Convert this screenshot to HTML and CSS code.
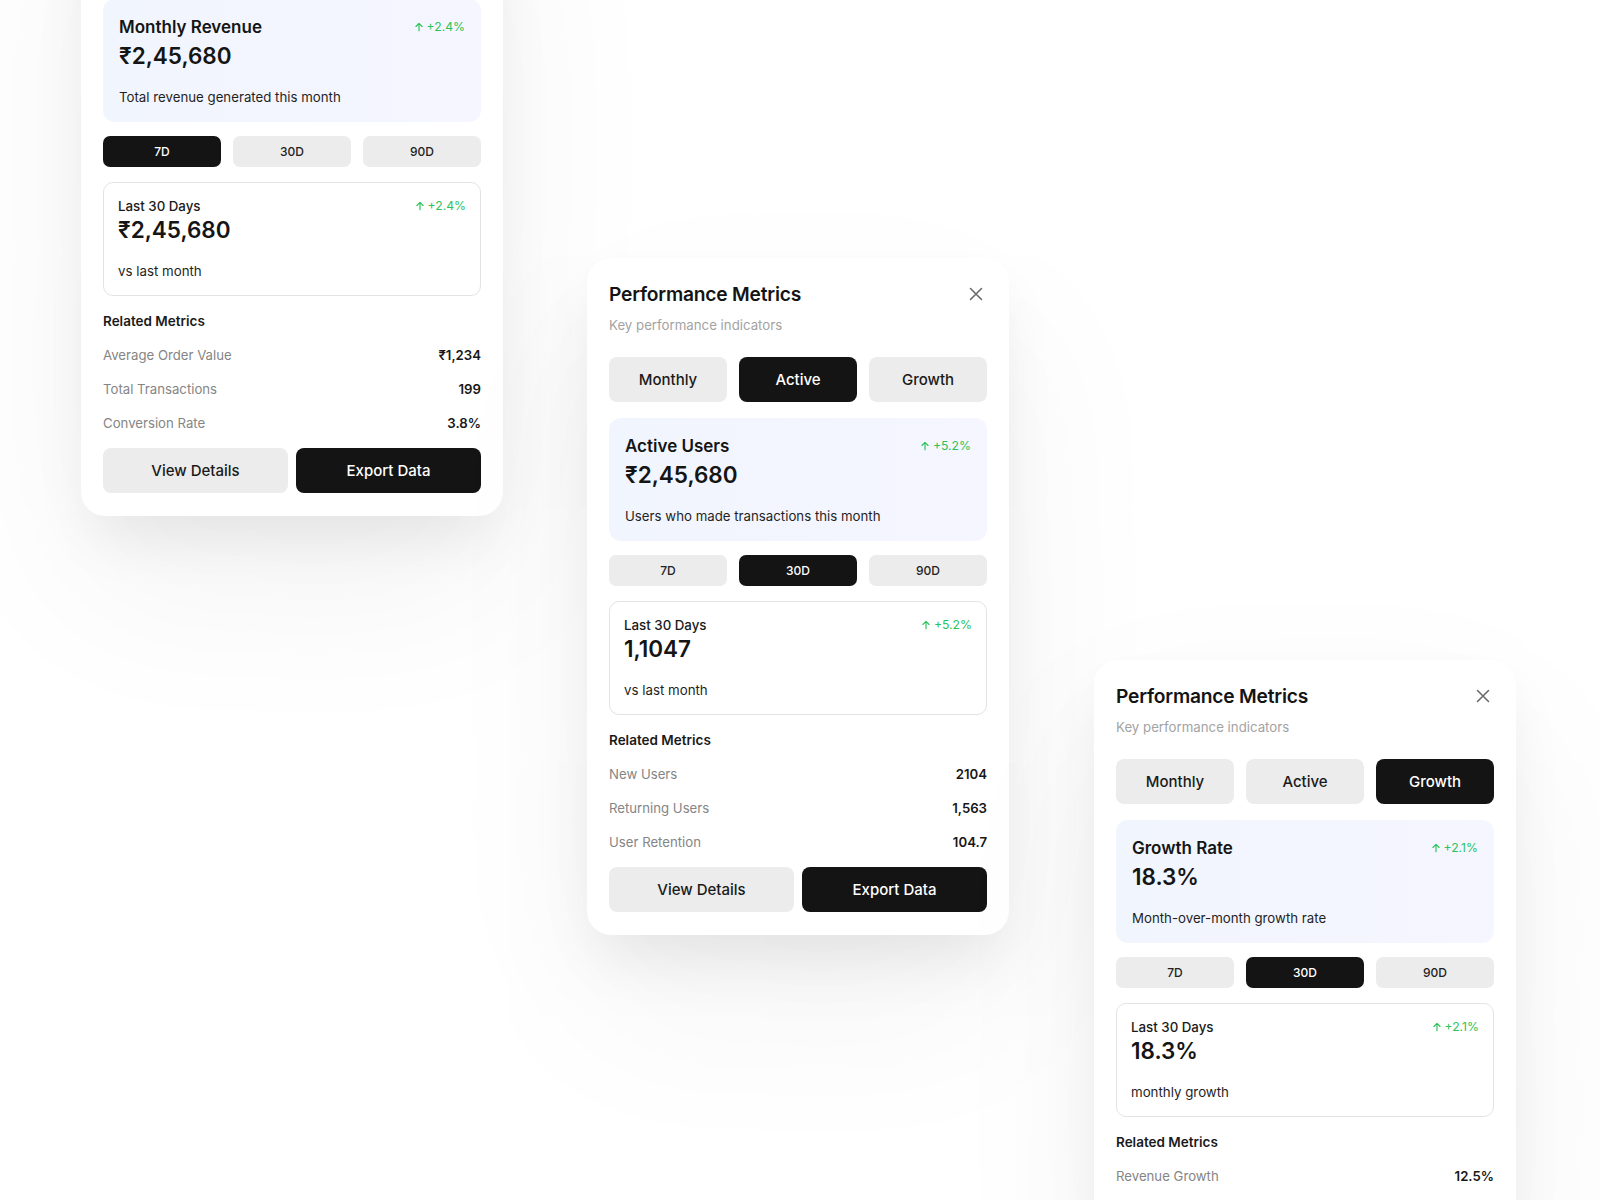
FILE: index.html
```html
<!DOCTYPE html>
<html lang="en">
<head>
<meta charset="utf-8">
<title>Performance Metrics</title>
<link rel="stylesheet" href="styles.css">
</head>
<body>
<div class="stage">

  <!-- Card 1 -->
  <section class="card card-a">
    <header class="card-head">
      <div>
        <h2 class="title">Performance Metrics</h2>
        <p class="subtitle">Key performance indicators</p>
      </div>
      <button class="close" aria-label="Close"><svg viewBox="0 0 14 14" width="14" height="14"><path d="M1.5 1.5l11 11M12.5 1.5l-11 11" fill="none" stroke="#6b6b6b" stroke-width="1.6" stroke-linecap="round"/></svg></button>
    </header>
    <div class="tabs">
      <button class="tab active">Monthly</button>
      <button class="tab">Active</button>
      <button class="tab">Growth</button>
    </div>
    <div class="hero">
      <div class="row-top">
        <h3 class="hero-title">Monthly Revenue</h3>
        <span class="delta"><svg viewBox="0 0 12 12" width="10" height="10"><path d="M6 10.5V1.8M2.3 5.4 6 1.7l3.7 3.7" fill="none" stroke="currentColor" stroke-width="1.4" stroke-linecap="round" stroke-linejoin="round"/></svg>+2.4%</span>
      </div>
      <div class="value">₹2,45,680</div>
      <p class="hero-desc">Total revenue generated this month</p>
    </div>
    <div class="periods">
      <button class="period active">7D</button>
      <button class="period">30D</button>
      <button class="period">90D</button>
    </div>
    <div class="summary">
      <div class="row-top">
        <span class="sum-label">Last 30 Days</span>
        <span class="delta"><svg viewBox="0 0 12 12" width="10" height="10"><path d="M6 10.5V1.8M2.3 5.4 6 1.7l3.7 3.7" fill="none" stroke="currentColor" stroke-width="1.4" stroke-linecap="round" stroke-linejoin="round"/></svg>+2.4%</span>
      </div>
      <div class="value">₹2,45,680</div>
      <p class="sum-desc">vs last month</p>
    </div>
    <h4 class="related-title">Related Metrics</h4>
    <ul class="metrics">
      <li><span>Average Order Value</span><b>₹1,234</b></li>
      <li><span>Total Transactions</span><b>199</b></li>
      <li><span>Conversion Rate</span><b>3.8%</b></li>
    </ul>
    <div class="actions">
      <button class="btn btn-light">View Details</button>
      <button class="btn btn-dark">Export Data</button>
    </div>
  </section>

  <!-- Card 2 -->
  <section class="card card-b">
    <header class="card-head">
      <div>
        <h2 class="title">Performance Metrics</h2>
        <p class="subtitle">Key performance indicators</p>
      </div>
      <button class="close" aria-label="Close"><svg viewBox="0 0 14 14" width="14" height="14"><path d="M1.5 1.5l11 11M12.5 1.5l-11 11" fill="none" stroke="#6b6b6b" stroke-width="1.6" stroke-linecap="round"/></svg></button>
    </header>
    <div class="tabs">
      <button class="tab">Monthly</button>
      <button class="tab active">Active</button>
      <button class="tab">Growth</button>
    </div>
    <div class="hero">
      <div class="row-top">
        <h3 class="hero-title">Active Users</h3>
        <span class="delta"><svg viewBox="0 0 12 12" width="10" height="10"><path d="M6 10.5V1.8M2.3 5.4 6 1.7l3.7 3.7" fill="none" stroke="currentColor" stroke-width="1.4" stroke-linecap="round" stroke-linejoin="round"/></svg>+5.2%</span>
      </div>
      <div class="value">₹2,45,680</div>
      <p class="hero-desc">Users who made transactions this month</p>
    </div>
    <div class="periods">
      <button class="period">7D</button>
      <button class="period active">30D</button>
      <button class="period">90D</button>
    </div>
    <div class="summary">
      <div class="row-top">
        <span class="sum-label">Last 30 Days</span>
        <span class="delta"><svg viewBox="0 0 12 12" width="10" height="10"><path d="M6 10.5V1.8M2.3 5.4 6 1.7l3.7 3.7" fill="none" stroke="currentColor" stroke-width="1.4" stroke-linecap="round" stroke-linejoin="round"/></svg>+5.2%</span>
      </div>
      <div class="value">1,1047</div>
      <p class="sum-desc">vs last month</p>
    </div>
    <h4 class="related-title">Related Metrics</h4>
    <ul class="metrics">
      <li><span>New Users</span><b>2104</b></li>
      <li><span>Returning Users</span><b>1,563</b></li>
      <li><span>User Retention</span><b>104.7</b></li>
    </ul>
    <div class="actions">
      <button class="btn btn-light">View Details</button>
      <button class="btn btn-dark">Export Data</button>
    </div>
  </section>

  <!-- Card 3 -->
  <section class="card card-c">
    <header class="card-head">
      <div>
        <h2 class="title">Performance Metrics</h2>
        <p class="subtitle">Key performance indicators</p>
      </div>
      <button class="close" aria-label="Close"><svg viewBox="0 0 14 14" width="14" height="14"><path d="M1.5 1.5l11 11M12.5 1.5l-11 11" fill="none" stroke="#6b6b6b" stroke-width="1.6" stroke-linecap="round"/></svg></button>
    </header>
    <div class="tabs">
      <button class="tab">Monthly</button>
      <button class="tab">Active</button>
      <button class="tab active">Growth</button>
    </div>
    <div class="hero">
      <div class="row-top">
        <h3 class="hero-title">Growth Rate</h3>
        <span class="delta"><svg viewBox="0 0 12 12" width="10" height="10"><path d="M6 10.5V1.8M2.3 5.4 6 1.7l3.7 3.7" fill="none" stroke="currentColor" stroke-width="1.4" stroke-linecap="round" stroke-linejoin="round"/></svg>+2.1%</span>
      </div>
      <div class="value">18.3%</div>
      <p class="hero-desc">Month-over-month growth rate</p>
    </div>
    <div class="periods">
      <button class="period">7D</button>
      <button class="period active">30D</button>
      <button class="period">90D</button>
    </div>
    <div class="summary">
      <div class="row-top">
        <span class="sum-label">Last 30 Days</span>
        <span class="delta"><svg viewBox="0 0 12 12" width="10" height="10"><path d="M6 10.5V1.8M2.3 5.4 6 1.7l3.7 3.7" fill="none" stroke="currentColor" stroke-width="1.4" stroke-linecap="round" stroke-linejoin="round"/></svg>+2.1%</span>
      </div>
      <div class="value">18.3%</div>
      <p class="sum-desc">monthly growth</p>
    </div>
    <h4 class="related-title">Related Metrics</h4>
    <ul class="metrics">
      <li><span>Revenue Growth</span><b>12.5%</b></li>
      <li><span>User Growth</span><b>8.7%</b></li>
      <li><span>Market Share</span><b>23.1%</b></li>
    </ul>
    <div class="actions">
      <button class="btn btn-light">View Details</button>
      <button class="btn btn-dark">Export Data</button>
    </div>
  </section>

</div>
</body>
</html>
```

FILE: styles.css
```css
* {
  box-sizing: border-box;
}

html, body {
  margin: 0;
  padding: 0;
}

body {
  background: #ffffff;
  font-family: Inter, "Noto Sans", "Liberation Sans", sans-serif;
  color: #171717;
  overflow: hidden;
}

.stage {
  position: relative;
  width: 1600px;
  height: 1200px;
  overflow: hidden;
  background: #ffffff;
}

.card {
  position: absolute;
  width: 422px;
  padding: 22px 22px 23px;
  background: #ffffff;
  border-radius: 24px;
  display: flex;
  flex-direction: column;
  box-shadow:
    0 30px 60px -10px rgba(0, 0, 0, 0.08),
    0 70px 180px 0 rgba(0, 0, 0, 0.055),
    0 0 1px rgba(0, 0, 0, 0.02);
}

.card-a { left: 81px; top: -161px; }
.card-b { left: 587px; top: 258px; }
.card-c { left: 1094px; top: 660px; }

.card-head {
  display: flex;
  justify-content: space-between;
  align-items: flex-start;
}

.title {
  margin: 0;
  font-size: 19.2px;
  line-height: 28px;
  font-weight: 600;
  letter-spacing: -0.01em;
  color: #141414;
}

.subtitle {
  margin: 7px 0 0;
  font-size: 13.25px;
  line-height: 20px;
  color: #a3a3a3;
}

.close {
  border: 0;
  background: none;
  padding: 0;
  margin: 7px 4px 0 0;
  width: 14px;
  height: 14px;
  display: flex;
}

button {
  font-family: inherit;
  cursor: pointer;
}

.tabs,
.periods {
  display: grid;
  grid-template-columns: repeat(3, 1fr);
  gap: 12px;
}

.tabs {
  margin-top: 22px;
}

.tab {
  height: 45px;
  border: 0;
  border-radius: 8px;
  background: #ececec;
  color: #1a1a1a;
  font-size: 15px;
  font-weight: 500;
}

.tab.active,
.period.active {
  background: #141414;
  color: #ffffff;
}

.hero {
  margin-top: 16px;
  padding: 16px 16px 15px;
  border-radius: 12px;
  background: linear-gradient(90deg, #f1f5fd 0%, #f5f6ff 100%);
}

.row-top {
  display: flex;
  justify-content: space-between;
  align-items: center;
}

.hero-title {
  margin: 0;
  font-size: 17px;
  line-height: 24px;
  font-weight: 600;
  color: #151515;
}

.delta {
  display: inline-flex;
  align-items: center;
  gap: 3px;
  font-size: 12.2px;
  line-height: 16px;
  color: #2cc35a;
}

.delta svg {
  display: block;
}

.value {
  margin-top: 2px;
  font-size: 22.5px;
  line-height: 30px;
  font-weight: 600;
  color: #151515;
}

.hero-desc {
  margin: 16px 0 0;
  font-size: 13.25px;
  line-height: 20px;
  color: #1f1f1f;
}

.periods {
  margin-top: 14px;
}

.period {
  height: 31px;
  border: 0;
  border-radius: 7px;
  background: #ececec;
  color: #222222;
  font-size: 12px;
  font-weight: 500;
}

.summary {
  margin-top: 15px;
  padding: 14px 14px 14px;
  border: 1px solid #e3e3e3;
  border-radius: 10px;
}

.sum-label {
  font-size: 13.3px;
  line-height: 18px;
  font-weight: 500;
  color: #1a1a1a;
}

.summary .value {
  margin-top: 0;
}

.sum-desc {
  margin: 16px 0 0;
  font-size: 13.3px;
  line-height: 20px;
  color: #1f1f1f;
}

.related-title {
  margin: 15px 0 0;
  font-size: 13.5px;
  line-height: 20px;
  font-weight: 600;
  color: #1a1a1a;
}

.metrics {
  list-style: none;
  margin: 14px 0 0;
  padding: 0;
  display: flex;
  flex-direction: column;
  gap: 14px;
}

.metrics li {
  display: flex;
  justify-content: space-between;
  align-items: center;
  font-size: 13.2px;
  line-height: 20px;
}

.metrics span {
  color: #858585;
}

.metrics b {
  font-weight: 600;
  color: #171717;
}

.actions {
  margin-top: 15px;
  display: grid;
  grid-template-columns: 1fr 1fr;
  gap: 8px;
}

.btn {
  height: 45px;
  border: 0;
  border-radius: 8px;
  font-size: 15px;
  font-weight: 500;
}

.btn-light {
  background: #ececec;
  color: #1a1a1a;
}

.btn-dark {
  background: #141414;
  color: #ffffff;
}
```
